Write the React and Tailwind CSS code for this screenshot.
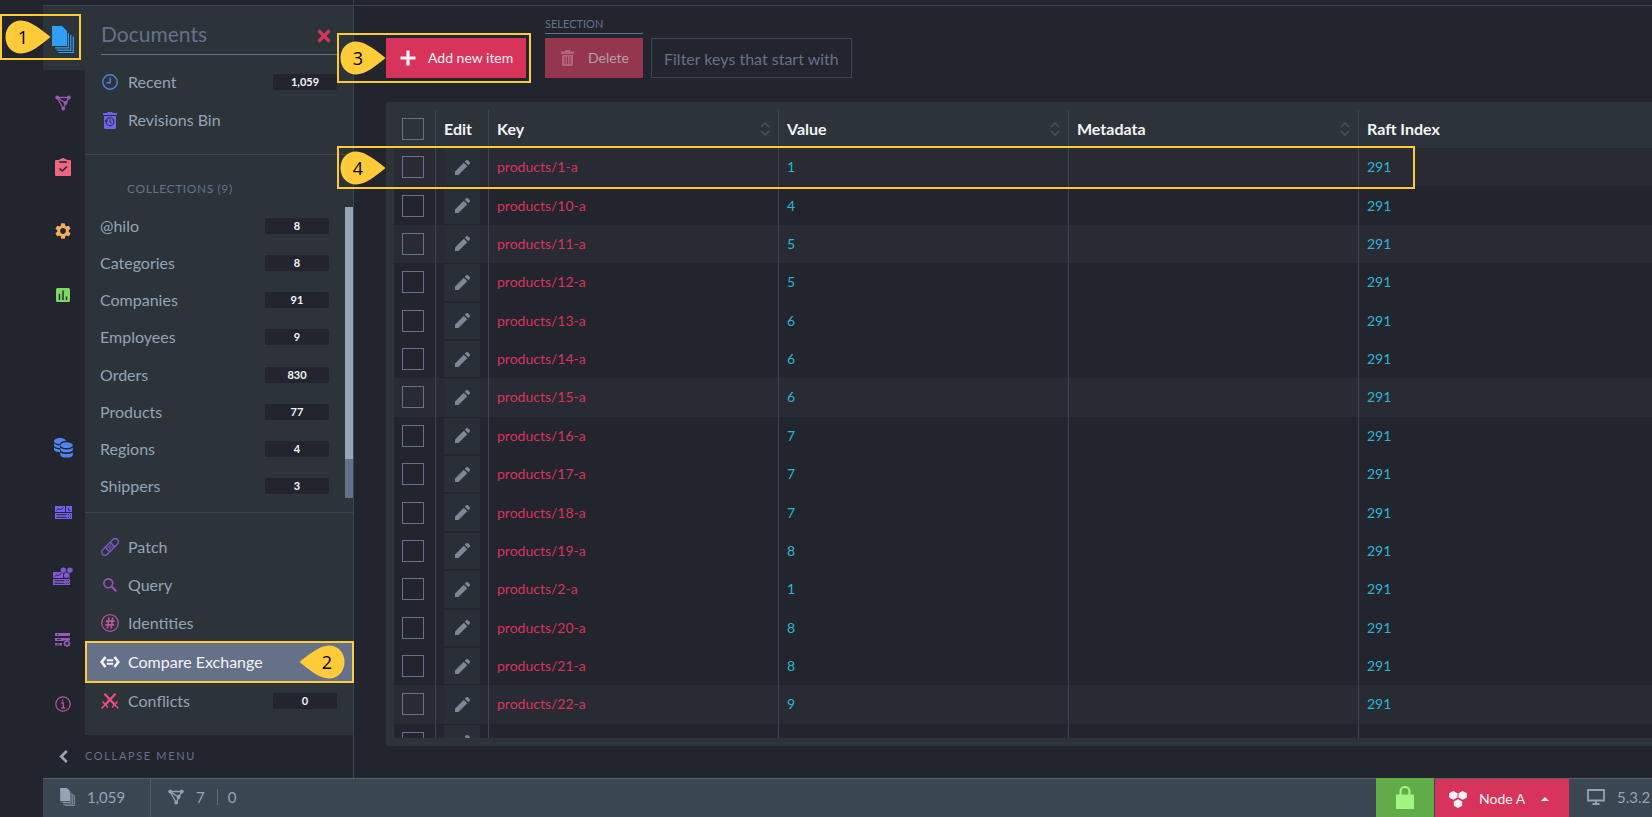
import React, { useState } from 'react'
import clsx from 'clsx'

const collections = [
    { name: '@hilo', count: '8' },
    { name: 'Categories', count: '8' },
    { name: 'Companies', count: '91' },
    { name: 'Employees', count: '9' },
    { name: 'Orders', count: '830' },
    { name: 'Products', count: '77' },
    { name: 'Regions', count: '4' },
    { name: 'Shippers', count: '3' },
]

const items = [
    { key: 'products/1-a', value: 1, raft: 291, shaded: true },
    { key: 'products/10-a', value: 4, raft: 291 },
    { key: 'products/11-a', value: 5, raft: 291, shaded: true },
    { key: 'products/12-a', value: 5, raft: 291 },
    { key: 'products/13-a', value: 6, raft: 291 },
    { key: 'products/14-a', value: 6, raft: 291 },
    { key: 'products/15-a', value: 6, raft: 291, shaded: true },
    { key: 'products/16-a', value: 7, raft: 291 },
    { key: 'products/17-a', value: 7, raft: 291 },
    { key: 'products/18-a', value: 7, raft: 291 },
    { key: 'products/19-a', value: 8, raft: 291 },
    { key: 'products/2-a', value: 1, raft: 291 },
    { key: 'products/20-a', value: 8, raft: 291 },
    { key: 'products/21-a', value: 8, raft: 291 },
    { key: 'products/22-a', value: 9, raft: 291, shaded: true },
    { key: '', value: '', raft: '' },
]

/* ---------- icons ---------- */

const DocumentsIcon = ({ className }) => (
    <svg viewBox="0 0 22 27" className={className} fill="none" stroke="currentColor" strokeWidth="1.200">
        <path d="M0 0h10l5 5v15H0z" fill="currentColor" stroke="none" />
        <path d="M16.300 7v14.800H3M18.800 8.700v15.500H4.500M21.300 10.500v16H6.500" />
    </svg>
)

const IndexesIcon = ({ className }) => (
    <svg viewBox="0 0 16 16" className={className} fill="none" stroke="currentColor" strokeWidth="1.300">
        <path d="M2 2.500h12L8.200 13.500zM2 2.500l8.500 5.500L14 2.500" />
        <g fill="currentColor" stroke="none">
            <circle cx="2.200" cy="2.500" r="1.900" />
            <circle cx="13.800" cy="2.500" r="1.900" />
            <circle cx="8.200" cy="13.600" r="1.900" />
            <circle cx="10.600" cy="8" r="1.900" />
        </g>
    </svg>
)

const TasksIcon = () => (
    <svg viewBox="0 0 16 18" className="w-4 h-[18px]">
        <path fill="currentColor" d="M1 2h3.500V1h2l.5-1h2l.5 1h2v1H15a1 1 0 0 1 1 1v14a1 1 0 0 1-1 1H1a1 1 0 0 1-1-1V3a1 1 0 0 1 1-1z" />
        <path d="M4.200 4h7.600M4.500 10.500l2.700 2.500 4.800-4.500" fill="none" stroke="#22252d" strokeWidth="1.500" />
    </svg>
)

const GearIcon = ({ className }) => (
    <svg viewBox="2 2 20 20" className={className}>
        <path
            fill="currentColor"
            d="M19.140 12.940c.04-.3.06-.61.06-.94 0-.32-.02-.64-.07-.94l2.030-1.580a.49.49 0 0 0 .12-.61l-1.920-3.320a.488.488 0 0 0-.59-.22l-2.390.96c-.5-.38-1.030-.7-1.620-.94l-.36-2.540a.484.484 0 0 0-.48-.41h-3.840c-.24 0-.43.17-.47.41l-.36 2.540c-.59.24-1.130.57-1.620.94l-2.390-.96c-.22-.08-.47 0-.59.22L2.740 8.870c-.12.21-.08.47.12.61l2.030 1.580c-.05.3-.09.63-.09.94s.02.64.07.94l-2.030 1.580a.49.49 0 0 0-.12.61l1.920 3.320c.12.22.37.29.59.22l2.390-.96c.5.38 1.030.7 1.620.94l.36 2.540c.05.24.24.41.48.41h3.840c.24 0 .44-.17.47-.41l.36-2.540c.59-.24 1.130-.56 1.620-.94l2.390.96c.22.08.47 0 .59-.22l1.920-3.320c.12-.22.07-.47-.12-.61l-2.010-1.580zM12 15.600c-1.980 0-3.600-1.620-3.600-3.600s1.620-3.600 3.600-3.600 3.600 1.620 3.600 3.600-1.620 3.600-3.600 3.600z"
        />
    </svg>
)

const StatsIcon = () => (
    <svg viewBox="0 0 14 14" className="w-3.5 h-3.5">
        <rect width="14" height="14" rx="1.500" fill="currentColor" />
        <path d="M3.500 12V6M7 12V2.500M10.500 12V8.500" stroke="#22252d" strokeWidth="1.400" />
    </svg>
)

const DatabasesIcon = () => (
    <svg viewBox="0 0 19 20" className="w-[19px] h-5" fill="currentColor">
        <path d="M0 3c0-1.600 2.700-3 6-3s6 1.400 6 3c-3 0-6 1.200-6 3.200C2.500 6 0 4.800 0 3zM0 5.300C1 6.400 3 7.300 6 7.500v2.600C2.700 10 0 9 0 7.300zM0 9.500c1 1.100 3 1.900 6 2v2.700c-3.300-.1-6-1.200-6-2.700z" />
        <ellipse cx="12.600" cy="7.200" rx="6.200" ry="2.900" />
        <path d="M6.400 9.500c1 1.200 3.300 1.900 6.200 1.900s5.200-.7 6.200-1.900v2.200c0 1.500-2.700 2.600-6.200 2.600s-6.200-1.100-6.200-2.600z" />
        <path d="M6.400 14.200c1 1.200 3.300 1.900 6.200 1.900s5.200-.7 6.200-1.900v2.700c0 1.600-2.700 2.700-6.200 2.700s-6.200-1.100-6.200-2.700z" />
    </svg>
)

const ServerIcon = ({ x = 0, y = 0 }) => (
    <g transform={`translate(${x} ${y})`}>
        <path fill="currentColor" d="M0 0h10v6H0zM11 0h6v6h-6zM0 7h17v6H0z" />
        <path d="M1.500 4.500l2-1.500 2 .5 3-2M13.500 1.800v2.500h2M1.500 8.700h10M1.500 11.300h10M13 8.700h1M15 8.700h1M13 11.300h1M15 11.300h1" fill="none" stroke="#22252d" strokeWidth="0.900" />
    </g>
)

const DashboardIcon = () => (
    <svg viewBox="0 0 17 13" className="w-[17px] h-[13px]">
        <ServerIcon />
    </svg>
)

const ClusterDashboardIcon = () => (
    <svg viewBox="0 0 20 18" className="w-5 h-[18px]">
        <ServerIcon y={5} />
        <g fill="currentColor" stroke="#22252d" strokeWidth="0.600">
            <path d="M10.300 0l3 1.500v3.200l-3 1.600-3-1.600V1.500z" />
            <path d="M16.900 0l3 1.500v3.200l-3 1.600-3-1.600V1.500z" />
            <path d="M13.600 5.200l3 1.500v3.200l-3 1.600-3-1.600V6.700z" />
        </g>
    </svg>
)

const ManageServerIcon = () => (
    <svg viewBox="0 0 16 14" className="w-4 h-3.5">
        <path fill="currentColor" d="M0 0h15v3H0zM0 5h15v2.500H9.500L8 8H0zM0 10h7v2.500H0z" />
        <path d="M2 1.500h1.500M2 6.400h4M2 11.200h2.500" stroke="#22252d" strokeWidth="0.900" />
        <circle cx="12" cy="10.500" r="2.200" fill="#22252d" stroke="currentColor" strokeWidth="1.500" />
        <path d="M12 6.700v1.400M12 12.900v1.100M8.500 10.500h1.100M14.400 10.500h1.100M9.600 8.200l.8.700M13.700 12.100l.8.700M14.400 8.200l-.8.700M10.300 12.100l-.8.700" stroke="currentColor" strokeWidth="1.200" />
    </svg>
)

const InfoIcon = () => (
    <svg viewBox="0 0 16 16" className="w-4 h-4" fill="none" stroke="currentColor">
        <circle cx="8" cy="8" r="7.200" strokeWidth="1.200" />
        <path d="M6.300 7H8.300v5M6.300 12h3.800M7.500 3.500v2" strokeWidth="1.300" />
    </svg>
)

const RecentIcon = () => (
    <svg viewBox="0 0 16 16" className="w-4 h-4" fill="none" stroke="currentColor">
        <circle cx="8" cy="8" r="7.200" strokeWidth="1.400" />
        <path d="M8.200 3.500v5.200H4.500" strokeWidth="1.500" />
    </svg>
)

const RevisionsBinIcon = () => (
    <svg viewBox="0 0 14 17" className="w-3.5 h-[17px]">
        <path fill="currentColor" d="M4.500 0h5v1H14v2H0V1h4.500zM1 4h12v11.500a1.500 1.500 0 0 1-1.500 1.500h-9A1.500 1.500 0 0 1 1 15.500z" />
        <circle cx="7" cy="9.700" r="3.900" fill="none" stroke="#2c343a" strokeWidth="1.100" />
        <path d="M7 7.300v2.700l1.900 1.200M2 8l1.200 2L5 8.600" fill="none" stroke="#2c343a" />
    </svg>
)

const PatchIcon = () => (
    <svg viewBox="0 0 18 18" className="w-[18px] h-[18px]" fill="none" stroke="currentColor" strokeWidth="1.300">
        <g transform="rotate(-45 9 9)">
            <rect x="-1.500" y="5.800" width="21" height="6.400" rx="3.200" />
            <path d="M5.500 5.800v6.400M12.500 5.800v6.400" />
            <path d="M7 7.800h1.500M9.800 7.800h1.500M8.300 9h1.500M7 10.300h1.500M9.800 10.300h1.500" />
        </g>
    </svg>
)

const QueryIcon = () => (
    <svg viewBox="0 0 14 14" className="w-3.5 h-3.5" fill="none" stroke="currentColor">
        <circle cx="5.300" cy="5.300" r="4.400" strokeWidth="1.600" />
        <path d="M8.500 8.500l4.800 4.800" strokeWidth="2" />
    </svg>
)

const IdentitiesIcon = () => (
    <svg viewBox="0 0 18 18" className="w-[18px] h-[18px]" fill="none" stroke="currentColor">
        <circle cx="9" cy="9" r="8.300" strokeWidth="1.200" />
        <path d="M8 3.500L6.500 14.500M11.700 3.500l-1.500 11M4.800 7.200h9M4.300 10.800h9" strokeWidth="1.700" />
    </svg>
)

const CompareIcon = () => (
    <svg viewBox="0 0 20 12" className="w-5 h-3" fill="none" stroke="currentColor" strokeWidth="2.600">
        <path d="M5.500 1L1.700 6l3.800 5M14.500 1l3.800 5-3.800 5" />
        <path d="M6.800 4.300h6.400M6.800 7.700h6.400" strokeWidth="2" />
    </svg>
)

const ConflictsIcon = () => (
    <svg viewBox="0 0 18 16" className="w-[18px] h-4" fill="none" stroke="currentColor">
        <path d="M3.500.8l10.300 11M14.500.8L4.200 11.800" strokeWidth="2.300" />
        <path d="M1.500 8.500l5.500 6M16.500 8.500l-5.500 6M4 12L.6 15.500M14 12l3.400 3.500" strokeWidth="1.500" />
    </svg>
)

const TrashIcon = () => (
    <svg viewBox="0 0 13 16" className="w-[13px] h-4">
        <path fill="currentColor" d="M4 0h5v1.500h4V4H0V1.500h4zM1 5h11v9.500a1.500 1.500 0 0 1-1.500 1.500h-8A1.500 1.500 0 0 1 1 14.500z" />
        <path d="M4 6.500v7.500M6.500 6.500v7.500M9 6.500v7.500" stroke="#94364d" />
    </svg>
)

const PencilIcon = () => (
    <svg viewBox="0 0 15 15" className="w-[15px] h-[15px]" fill="currentColor">
        <path d="M0 11.500L8.800 2.700l3.500 3.500L3.500 15H0zM9.800 1.700l1.200-1.200a1.500 1.500 0 0 1 2.200 0l1.300 1.300a1.500 1.500 0 0 1 0 2.200l-1.200 1.200z" />
    </svg>
)

const SortIcon = () => (
    <svg viewBox="0 0 10 14" className="w-2.5 h-3.5" fill="none" stroke="currentColor" strokeWidth="1.600">
        <path d="M1 5l4-4 4 4M1 9l4 4 4-4" />
    </svg>
)

/* ---------- callouts ---------- */

const Pin = ({ number, flip, className }) => (
    <span className={clsx('absolute flex h-[34px] w-[46px] items-center', flip ? 'justify-end' : 'justify-start', className)}>
        <svg viewBox="0 0 46 34" className={clsx('absolute inset-0 h-full w-full', flip && 'rotate-180')}>
            <path fill="#ffcb39" d="M45.500 17C37 10 25.500.5 16 .5 7 .5.500 7.500.500 17S7 33.500 16 33.500C25.500 33.500 37 24 45.500 17z" />
        </svg>
        <span className="relative w-9 text-center font-['Open_Sans',sans-serif] text-lg leading-none text-black">{number}</span>
    </span>
)

const Callout = ({ number, flip, className, pinClass = 'left-px' }) => (
    <div className={clsx('pointer-events-none absolute z-20 flex items-center border-2 border-[#ffcb39]', className)}>
        <Pin number={number} flip={flip} className={pinClass} />
    </div>
)

/* ---------- layout parts ---------- */

const RailLink = ({ label, color, children }) => (
    <a href="#" aria-label={label} className={clsx('flex h-16 items-center justify-center pt-0.5 pr-0.5', color)}>
        {children}
    </a>
)

const Badge = ({ children }) => (
    <span className="w-16 rounded-xs bg-[#22252d] text-center text-[11px] leading-4 font-bold text-gray-100">{children}</span>
)

const MenuLink = ({ icon, color, label, count, children, active }) => (
    <a
        href="#"
        className={clsx(
            'relative flex items-center pr-4 pl-[15px]',
            active ? 'h-10 bg-[#657189] text-gray-100' : 'h-[38px] text-[#94a3b5]'
        )}
    >
        <span className={clsx('flex w-5 justify-center', color)}>{icon}</span>
        <span className="ml-2 flex-1">{label}</span>
        {count && <Badge>{count}</Badge>}
        {children}
    </a>
)

const Sidebar = () => (
    <aside className="flex w-[311px] shrink-0 flex-col border-r border-[#3a4552]">
        <div className="flex min-h-0 flex-1">
            <nav aria-label="Main" className="flex w-[42px] shrink-0 flex-col">
                <div className="bg-[#2c343a]">
                    <RailLink label="Documents" color="text-[#2f9ef4]"><DocumentsIcon className="h-[27px] w-[22px]" /></RailLink>
                </div>
                <RailLink label="Indexes" color="text-[#945ab5]"><IndexesIcon className="h-4 w-4" /></RailLink>
                <RailLink label="Tasks" color="text-[#f06582]"><TasksIcon /></RailLink>
                <RailLink label="Settings" color="text-[#f0ad5c]"><GearIcon className="h-4 w-4" /></RailLink>
                <RailLink label="Stats" color="text-[#7bd95f]"><StatsIcon /></RailLink>
                <div className="mt-auto">
                    <RailLink label="Databases" color="text-[#4f86ed]"><DatabasesIcon /></RailLink>
                    <RailLink label="Server Dashboard" color="text-[#6f62ec]"><DashboardIcon /></RailLink>
                    <RailLink label="Cluster Dashboard" color="text-[#8458cf]"><ClusterDashboardIcon /></RailLink>
                    <RailLink label="Manage Server" color="text-[#965ab8]"><ManageServerIcon /></RailLink>
                    <RailLink label="About" color="text-[#bb529f]"><InfoIcon /></RailLink>
                </div>
            </nav>

            <div className="flex min-w-0 flex-1 flex-col bg-[#2c343a]">
                <div className="mx-4 flex h-[49px] items-center justify-between border-b border-[#65718a] pt-2">
                    <h2 className="text-[21px] leading-7 text-[#65718a]">Documents</h2>
                    <button aria-label="Close" className="mt-1 mr-1.5 text-[#d8335a]">
                        <svg viewBox="0 0 14 14" className="h-3.5 w-3.5" stroke="currentColor" strokeWidth="3.200">
                            <path d="M1.500 1.500l11 11M12.500 1.500l-11 11" />
                        </svg>
                    </button>
                </div>
                <div className="border-b border-[#3a4552] pt-2 pb-[15px]">
                    <MenuLink icon={<RecentIcon />} color="text-[#4f7fe0]" label="Recent" count="1,059" />
                    <MenuLink icon={<RevisionsBinIcon />} color="text-[#6f62ec]" label="Revisions Bin" />
                </div>

                <h3 className="pt-6 pb-2 pl-[42px] text-xs leading-5 tracking-wider text-[#65718a]">COLLECTIONS (9)</h3>
                <div className="flex h-[291px] overflow-hidden">
                    <ul className="grid h-[298px] flex-1 auto-rows-fr pr-4 pl-[15px] text-[#94a3b5]">
                        {collections.map((c) => (
                            <li key={c.name}>
                                <a href="#" className="flex h-full items-center justify-between">
                                    <span>{c.name}</span>
                                    <Badge>{c.count}</Badge>
                                </a>
                            </li>
                        ))}
                    </ul>
                    <div className="w-2 bg-[#65718a]">
                        <div className="h-[252px] bg-[#97a5b8]"></div>
                    </div>
                </div>

                <div className="mt-3.5 border-t border-[#3a4552] pt-[15px]">
                    <MenuLink icon={<PatchIcon />} color="text-[#8458cf]" label="Patch" />
                    <MenuLink icon={<QueryIcon />} color="text-[#9a55b8]" label="Query" />
                    <MenuLink icon={<IdentitiesIcon />} color="text-[#bb529f]" label="Identities" />
                    <MenuLink icon={<CompareIcon />} label="Compare Exchange" active>
                        <Callout number="2" flip className="-inset-y-px -right-px left-0" pinClass="right-[7px]" />
                    </MenuLink>
                    <MenuLink icon={<ConflictsIcon />} color="text-[#ea4f80]" label="Conflicts" count="0" />
                </div>
            </div>
        </div>

        <button className="flex h-[43px] shrink-0 items-center text-[11px] tracking-[0.15em] text-[#65718a]">
            <span className="flex w-[42px] justify-center pr-0.5 text-[#97a5b8]">
                <svg viewBox="0 0 9 13" className="h-[13px] w-[9px]" fill="none" stroke="currentColor" strokeWidth="2.600">
                    <path d="M7.800 1L2.200 6.500l5.600 5.500" />
                </svg>
            </span>
            COLLAPSE MENU
        </button>
    </aside>
)

const Toolbar = () => (
    <div className="flex h-[72px] items-end">
        <div className="relative">
            <button className="flex h-10 w-[140px] items-center bg-[#d8335a] pl-3.5 text-sm text-gray-100">
                <svg viewBox="0 0 16 16" className="mr-3 h-4 w-4" stroke="currentColor" strokeWidth="3.200">
                    <path d="M8 .5v15M.5 8h15" />
                </svg>
                Add new item
            </button>
            <Callout number="3" className="-top-[5px] -left-[49px] h-[50px] w-[194px]" />
        </div>
        <div className="ml-[19px] w-[98px]">
            <div className="mb-1 border-b border-[#65718a] text-[11px] leading-[18px] text-[#65718a]">SELECTION</div>
            <button disabled className="flex h-10 w-full items-center bg-[#94364d] pl-4 text-sm text-[#b5a0a9]">
                <span className="mr-3.5 text-[#b3647a]"><TrashIcon /></span>
                Delete
            </button>
        </div>
        <input
            type="text"
            aria-label="Filter keys"
            placeholder="Filter keys that start with"
            className="ml-2 h-10 w-[201px] border border-[#3a4552] bg-transparent px-3 text-base text-gray-100 outline-none placeholder:text-[#65718a]"
        />
    </div>
)

const Tick = ({ label, checked, onChange }) => (
    <input
        type="checkbox"
        aria-label={label}
        checked={checked}
        onChange={onChange}
        className="h-[22px] w-[22px] appearance-none border border-[#65718a] checked:bg-[#65718a]"
    />
)

const cell = 'flex items-center border-r border-[#3a4552]'

const ItemsTable = () => {
    const [selected, setSelected] = useState([])
    const allSelected = selected.length === items.length

    const toggle = (key) =>
        setSelected(selected.includes(key) ? selected.filter((k) => k !== key) : [...selected, key])

    return (
        <div className="relative mt-6 min-h-0 flex-1 bg-[#2c343a] py-2 pl-2">
            <div className="h-full overflow-hidden">
                <table className="block text-sm">
                    <thead className="block">
                        <tr className="flex h-[38px] text-left text-base text-gray-100">
                            <th className={clsx(cell, 'w-[42px] pl-2')}>
                                <Tick
                                    label="Select all"
                                    checked={allSelected}
                                    onChange={() => setSelected(allSelected ? [] : items.map((i) => i.key))}
                                />
                            </th>
                            <th className={clsx(cell, 'w-[53px] pl-2')}>Edit</th>
                            {['Key', 'Value', 'Metadata'].map((title) => (
                                <th key={title} className={clsx(cell, 'w-[290px] justify-between px-2')}>
                                    {title}
                                    <span className="text-[#465260]"><SortIcon /></span>
                                </th>
                            ))}
                            <th className="flex flex-1 items-center pl-2">Raft Index</th>
                        </tr>
                    </thead>
                    <tbody className="grid h-[614px] auto-rows-fr bg-[#22252d]">
                        {items.map((item, i) => (
                            <tr key={i} className={clsx('flex', item.shaded && 'bg-[#282b33]')}>
                                <td className={clsx(cell, 'w-[42px] pl-2')}>
                                    <Tick
                                        label={`Select ${item.key}`}
                                        checked={selected.includes(item.key)}
                                        onChange={() => toggle(item.key)}
                                    />
                                </td>
                                <td className={clsx(cell, 'w-[53px] py-px pl-2')}>
                                    <button
                                        aria-label={`Edit ${item.key}`}
                                        className="flex h-full w-9 items-center justify-center bg-[#282f36] text-[#7c8795]"
                                    >
                                        <PencilIcon />
                                    </button>
                                </td>
                                <td className={clsx(cell, 'w-[290px] pl-2')}>
                                    <a href="#" className="text-[#d8335a]">{item.key}</a>
                                </td>
                                <td className={clsx(cell, 'w-[290px] pl-2 text-[#2fb3d4]')}>{item.value}</td>
                                <td className={clsx(cell, 'w-[290px]')}></td>
                                <td className="flex flex-1 items-center pl-2 text-[#2fb3d4]">{item.raft}</td>
                            </tr>
                        ))}
                    </tbody>
                </table>
            </div>
            <Callout number="4" className="top-11 -left-[49px] h-[43px] w-[1078px]" />
        </div>
    )
}

const Footer = () => (
    <footer className="flex h-[39px] shrink-0 border-t border-[#58616c] bg-[#3b4653] text-[15px] text-[#94a3b5]">
        <div className="flex w-[108px] items-center border-r border-[#4f5b69] pb-0.5 pl-[17px]">
            <DocumentsIcon className="mr-3 h-[18px] w-[15px]" />
            1,059
        </div>
        <div className="flex flex-1 items-center pb-0.5 pl-[17px]">
            <IndexesIcon className="mr-3 h-4 w-4" />
            7
            <span className="mr-2.5 ml-3 h-4 w-px bg-[#5a6b84]"></span>
            0
        </div>
        <div className="-mt-px flex w-[58px] items-center justify-center bg-[#61ab48] text-[#a1f581]">
            <svg viewBox="0 0 18 23" className="h-[23px] w-[18px]">
                <path d="M4.500 9V5.500a4.500 4.500 0 0 1 9 0V9" fill="none" stroke="currentColor" strokeWidth="2.200" />
                <rect y="8.500" width="18" height="14.500" fill="currentColor" />
            </svg>
        </div>
        <button className="ml-px flex w-[134px] items-center bg-[#d8335a] pt-0.5 pl-3.5 text-sm text-gray-100">
            <svg viewBox="0 0 18 17" className="mr-3 h-[17px] w-[18px]" fill="currentColor">
                <path d="M4.300 0l4.200 2.200v4.400L4.300 8.800.1 6.600V2.200z" />
                <path d="M13.700 0l4.200 2.200v4.400l-4.200 2.200-4.200-2.200V2.200z" />
                <path d="M9 8.200l4.200 2.200v4.400L9 17l-4.200-2.200v-4.400z" />
            </svg>
            Node A
            <svg viewBox="0 0 8 4" className="ml-4 h-1 w-2" fill="currentColor">
                <path d="M0 4l4-4 4 4z" />
            </svg>
        </button>
        <div className="flex w-[83px] items-center pb-0.5 pl-[18px]">
            <svg viewBox="0 0 18 16" className="mr-3 h-4 w-[18px]" fill="none" stroke="currentColor" strokeWidth="1.800">
                <path d="M1 1h16v10.500H1zM9 12v3M5.500 15h7" />
            </svg>
            5.3.2
        </div>
    </footer>
)

const App = () => {
    return (
        <div className="relative flex h-screen overflow-hidden bg-[#22252d] font-['Lato',sans-serif] text-base">
            <Callout number="1" className="top-3.5 left-0 h-[46px] w-[81px]" pinClass="left-[3px]" />
            <div className="w-[43px] shrink-0"></div>
            <div className="flex min-w-0 flex-1 flex-col">
                <header className="h-1.5 shrink-0 border-b border-[#3a4552]">
                    <div className="h-full w-[311px] border-r border-[#3a4552]"></div>
                </header>
                <div className="flex min-h-0 flex-1">
                    <Sidebar />
                    <main className="flex min-w-0 flex-1 flex-col pb-8 pl-8">
                        <Toolbar />
                        <ItemsTable />
                    </main>
                </div>
                <Footer />
            </div>
        </div>
    )
}

export default App
